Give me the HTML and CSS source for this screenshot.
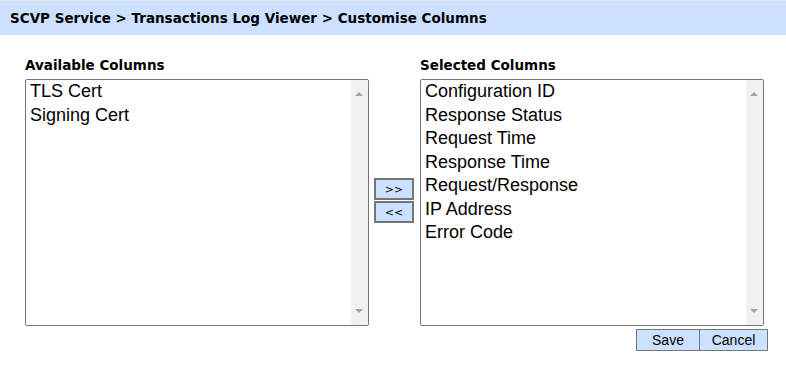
FILE: index.html
```html
<!DOCTYPE html>
<html lang="en">

<head>
    <meta charset="UTF-8">
    <title>Customise Columns</title>
    <link rel="stylesheet" href="styles.css">
</head>

<body>
    <div class="crumbs">SCVP Service &gt; Transactions Log Viewer &gt; Customise Columns</div>

    <div class="picker">
        <div class="column">
            <div class="label">Available Columns</div>
            <div class="listbox">
                <div class="items">
                    <div class="item">TLS Cert</div>
                    <div class="item">Signing Cert</div>
                </div>
                <div class="scrollbar">
                    <span class="arrow up"></span>
                    <span class="arrow down"></span>
                </div>
            </div>
        </div>

        <div class="movers">
            <button class="mover">&gt;&gt;</button>
            <button class="mover">&lt;&lt;</button>
        </div>

        <div class="column">
            <div class="label">Selected Columns</div>
            <div class="listbox">
                <div class="items">
                    <div class="item">Configuration ID</div>
                    <div class="item">Response Status</div>
                    <div class="item">Request Time</div>
                    <div class="item">Response Time</div>
                    <div class="item">Request/Response</div>
                    <div class="item">IP Address</div>
                    <div class="item">Error Code</div>
                </div>
                <div class="scrollbar">
                    <span class="arrow up"></span>
                    <span class="arrow down"></span>
                </div>
            </div>
            <div class="actions">
                <button class="action save">Save</button>
                <button class="action cancel">Cancel</button>
            </div>
        </div>
    </div>
</body>

</html>
```

FILE: styles.css
```css
* {
    padding: 0;
    margin: 0;
    box-sizing: border-box;
}

body {
    background-color: #ffffff;
    font-family: "DejaVu Sans", Verdana, sans-serif;
    color: #000000;
}

.crumbs {
    height: 35px;
    border-top: 1px solid #e2e6ec;
    background-color: #cce0ff;
    padding: 9px 0 0 10px;
    font-size: 13.5px;
    font-weight: bold;
}

.picker {
    display: flex;
    align-items: flex-start;
    padding: 22px 0 0 25px;
}

.column {
    display: flex;
    flex-direction: column;
    width: 344px;
}

.label {
    height: 22px;
    font-size: 13.5px;
    font-weight: bold;
}

.listbox {
    display: flex;
    height: 247px;
    border: 1px solid #767676;
    border-radius: 2px;
    background-color: #ffffff;
}

.items {
    flex: 1;
    padding-left: 4px;
    font-family: "Liberation Sans", Arial, sans-serif;
    font-size: 18px;
}

.item {
    height: 23.5px;
    line-height: 23px;
}

.scrollbar {
    position: relative;
    width: 17px;
    background-color: #f1f1f1;
}

.arrow {
    position: absolute;
    left: 4px;
    width: 0;
    height: 0;
    border-left: 4px solid transparent;
    border-right: 4px solid transparent;
}

.arrow.up {
    top: 12px;
    border-bottom: 4px solid #a3a3a3;
}

.arrow.down {
    bottom: 12px;
    border-top: 4px solid #a3a3a3;
}

.movers {
    display: flex;
    flex-direction: column;
    gap: 1px;
    margin: 121px 6px 0 5px;
}

.mover {
    width: 40px;
    height: 22px;
    background-color: #cce0ff;
    border: 2px solid #767676;
    font-family: "DejaVu Sans", Verdana, sans-serif;
    font-size: 11px;
    color: #000000;
}

.actions {
    display: flex;
    justify-content: flex-end;
    margin: 3px -4px 0 0;
}

.action {
    height: 22px;
    background-color: #cce0ff;
    border: 1px solid #767676;
    font-family: "Liberation Sans", Arial, sans-serif;
    font-size: 14px;
    color: #000000;
}

.save {
    width: 64px;
}

.cancel {
    width: 68px;
    border-left: none;
}
```
